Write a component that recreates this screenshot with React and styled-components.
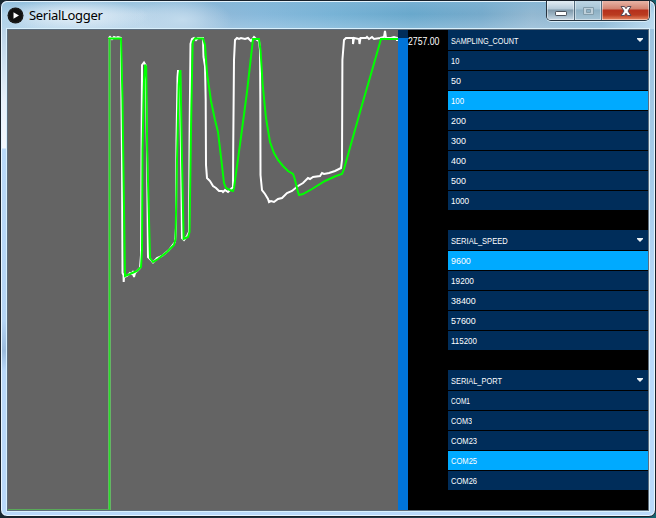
import React from "react";
import styled, { createGlobalStyle } from "styled-components";

const Global = createGlobalStyle`
  *, *::before, *::after { box-sizing: border-box; }
  body { margin: 0; background: #18242e; overflow: hidden; }
`;

const Desktop = styled.div`
  width: 656px;
  height: 518px;
  background: linear-gradient(90deg, #17262f, #263b49 60%, #14616f);
`;

const Window = styled.div`
  width: 656px;
  height: 517px;
  border: 1px solid #17202a;
  border-radius: 7px;
  padding: 0 5px 5px 6px;
  background:
    linear-gradient(180deg, transparent 0 28px, #b9d3e8 28px, #e8f1fb 100px, #f3f8fd 147px, #b9d9f8 148px, #b5d5f5 320px, #9bbbdc 350px, #b9d9fa 370px, #b9d9fa) 0 0 / 7px 100% no-repeat,
    linear-gradient(180deg, transparent 0 28px, #9dc3df 28px, #a5cbe9 180px, #b9d9fb 320px, #b9d9fb) 100% 0 / 7px 100% no-repeat,
    #b9d9fa;
  box-shadow: inset 0 0 0 1px #e9f6ff;
`;

const TitleBar = styled.header`
  display: flex;
  height: 28px;
  margin: 0 -4px 0 -5px;
  padding-left: 5px;
  border-top: 1px solid #e4f3fc;
  border-radius: 6px 6px 0 0;
  background:
    radial-gradient(ellipse 75px 17px at 72px 14px, #e6f0f8, #e6f0f800),
    radial-gradient(ellipse 50px 22px at 180px 18px, #c2dbed, #c2dbed00),
    linear-gradient(180deg, #80b5d690, transparent 45%, #c9e2f450),
    linear-gradient(90deg, #add0e8 0, #bad5e9 140px, #91b9d8 205px, #87b9db 260px, #78b3d6 330px, #69a8cc 410px, #76aacb 480px, #93b8d1 530px, #87b4d2 600px, #b7d8ee);
`;

const AppIcon = styled.svg`
  width: 17px;
  height: 17px;
  margin-top: 5px;
`;

const Title = styled.h1`
  margin: 3px auto 0 5px;
  font: 13px/20px "Noto Sans", sans-serif;
  letter-spacing: -0.3px;
  color: #000;
`;

const Controls = styled.div`
  display: flex;
  width: 104px;
  height: 20px;
  margin: -1px 4px 0 0;
  border: 1px solid #26333f;
  border-top: 0;
  border-radius: 0 0 5px 5px;
  overflow: hidden;
  box-shadow: 0 1px 0 #d9edf8, 1px 0 0 #c6dbea;
`;

const tones = {
  plain: "linear-gradient(180deg, #e2edf4, #b5cad9 8px, #8099aa 9px, #9fb7c7 14px, #cad9e4)",
  disabled: "linear-gradient(180deg, #bed6e4, #a7c4d5 8px, #8cafc3 9px, #a6c4d5)",
  close: "linear-gradient(180deg, #e8b4a6, #d38370 8px, #b6301c 9px, #ba3b20 14px, #e88964)",
};

const Control = styled.button`
  display: grid;
  place-items: center;
  width: ${(p) => p.$width}px;
  height: 19px;
  padding: 0;
  border: 0;
  border-right: ${(p) => (p.$tone === "close" ? "0" : "1px solid #526b7d")};
  background: ${(p) => tones[p.$tone]};
  box-shadow: inset 1px 0 #ffffff70, inset -1px -1px #ffffff70;
`;

const Glyph = styled.svg`
  display: block;
  width: 14px;
  height: 14px;
`;

const Client = styled.main`
  display: grid;
  grid-template-columns: 390px 10px 40px 200px;
  width: 642px;
  height: 482px;
  border: 1px solid #5d6e7e;
  background: #000;
  box-shadow: 0 0 0 1px #d9f0fc;
`;

const Chart = styled.svg`
  width: 390px;
  height: 480px;
  background: #646464;
`;

const Slider = styled.div`
  padding-top: 8px;
  background: #002d5a;
`;

const SliderFill = styled.div`
  height: 472px;
  background: #0074d9;
`;

const Reading = styled.output`
  padding-top: 5px;
  font: 10px/14px "Liberation Sans", sans-serif;
  color: #fff;
  white-space: nowrap;
`;

const Condensed = styled.span`
  display: block;
  transform: scaleX(${(p) => p.$scale});
  transform-origin: left;
  white-space: nowrap;
`;

const Sidebar = styled.aside`
  display: flex;
  flex-direction: column;
  gap: 20px;
`;

const List = styled.section`
  display: flex;
  flex-direction: column;
  gap: 1px;
  color: #fff;
  font: 9.7px/18px "Liberation Sans", sans-serif;
`;

const ListHeader = styled.div`
  display: flex;
  justify-content: space-between;
  height: 20px;
  padding: 2px 5px 0 3px;
  background: #002d5a;
`;

const Arrow = styled.svg`
  width: 6px;
  height: 4px;
  margin-top: 6px;
`;

const Item = styled.div`
  height: 19px;
  padding: 1px 3px 0;
  line-height: 17px;
  background: ${(p) => (p.$active ? "#00aaff" : "#002d5a")};
`;

const lists = [
  {
    name: "SAMPLING_COUNT", scale: 0.75, active: "100",
    items: [["10", 0.77], ["50", 0.92], ["100", 0.81], ["200", 0.92], ["300", 0.92], ["400", 0.92], ["500", 0.92], ["1000", 0.84]],
  },
  {
    name: "SERIAL_SPEED", scale: 0.78, active: "9600",
    items: [["9600", 0.92], ["19200", 0.85], ["38400", 0.92], ["57600", 0.92], ["115200", 0.82]],
  },
  {
    name: "SERIAL_PORT", scale: 0.765, active: "COM25",
    items: [["COM1", 0.68], ["COM3", 0.75], ["COM23", 0.78], ["COM25", 0.78], ["COM26", 0.78]],
  },
];

const raw = "109,510 109,38 110,37 112,39 114,37 116,38 118,37 121,38 121,55 122,158 122.5,273 123.5,275 123.7,282 124,277 127,276 130,273 132,274 133,271 134,277 135,273 140,268 141,255 141.5,155 142,72 142,65 144,62.5 145.5,65 147,150 148,257 151,260 153,262.5 157,258 162,256 169,250 175,242 176,228 176.5,140 177.5,77 178,71 180,71 181,150 182,238 184,240 187,236 189,232 189.5,140 190.5,44 192,39 194,38 196,40 198,38 203,38 203.5,57 205,66 205.7,100 206,165 207,178 210,181 213,186 216,188 219,191 222,191 223,192 225,190 228,192 232,188 233,188 233.2,150 234,60 235,40 237,38 239,39 241,38 245,39 248,38 251,41 254,37 257,40 259,41 260,50 260.3,100 260.5,175 262,190 265,194 268,199 269,202 271,201 274,202 278,199 282,198 287,193 292,191 298,186 303,183 308,178 310,179 313,177 320,176 322,173 324,174 329,173 335,171 341,168 342,160 342.4,60 344,40 346,38 353,38 353,44 354,38 359,39 359.5,44 360.5,38 366,38 367,37 369,39 372,37 374,39 380,38 384,37 385,31 386,38 391,38 394,37 397,38 397,41";
const smooth = "109,510 109,38.5 121,38.5 122.5,100 123.3,160 125,276 130,274 137,271 141,267 142,250 142.5,150 144,80 145.2,64.5 146.2,67 147.2,150 150,258 153,262 158,259 167,252 174,245 175.5,239 177,160 178.7,85 179.8,71 180.5,71 181.8,150 183.6,239 188,237 189.5,232 191,130 192,75 192.7,42 195,38.5 203,38.5 205,45 207,73 211,101 215,120 218,132 221,157 224,183 226,188 230,190 233,191 234,188 241,137 247,92 253,39 259,39 260.5,50 262.7,85 266,118 270,142 274,153 278,160 283,166 288,171 293,174 294.5,178 298,192 299,195 303,194 312,189 325,181 336,176 342,174 344,169 353,137 362,105 371,74 381,39 398,39";

function WaveChart() {
  return (
    <Chart viewBox="8 30 390 480" fill="none" aria-label="Serial data">
      <polyline points={raw} stroke="#fff" strokeWidth="2" />
      <polyline points={smooth} stroke="#00ff00" strokeWidth="2" />
      <path d="M109.5 39V510" stroke="#64b464" strokeWidth="3" />
      <path d="M109.5 39V510" stroke="#28dc28" strokeWidth="1" />
      <path d="M8 509.5H109" stroke="#59a959" />
    </Chart>
  );
}

function DropList({ name, scale, active, items }) {
  return (
    <List>
      <ListHeader>
        <Condensed $scale={scale}>{name}</Condensed>
        <Arrow viewBox="0 0 6 4"><path d="M0 0H6V1L3 4L0 1Z" fill="#e9eff3" /></Arrow>
      </ListHeader>
      {items.map(([label, labelScale]) => (
        <Item key={label} $active={label === active}>
          <Condensed $scale={labelScale}>{label}</Condensed>
        </Item>
      ))}
    </List>
  );
}

export default function App() {
  return (
    <>
      <Global />
      <Desktop>
        <Window>
          <TitleBar>
            <AppIcon viewBox="0 0 17 17">
              <circle cx="8.5" cy="8.5" r="8" fill="#111" />
              <circle cx="8.5" cy="8.5" r="7" fill="none" stroke="#3b3b3b" strokeWidth=".7" strokeDasharray="1 1" />
              <path d="M6.5 5.3L12 8.5L6.5 11.7Z" fill="#fff" />
            </AppIcon>
            <Title>SerialLogger</Title>
            <Controls>
              <Control $width={28} $tone="plain" aria-label="Minimize">
                <Glyph viewBox="0 0 14 14"><rect x="1.5" y="7.5" width="11" height="4" rx=".7" fill="#fff" stroke="#4a515b" /></Glyph>
              </Control>
              <Control $width={27} $tone="disabled" aria-label="Maximize">
                <Glyph viewBox="0 0 14 14"><path fillRule="evenodd" d="M2.5 3.5h10v7h-10zM5.5 5.5h4v3h-4z" fill="#bfd0da" stroke="#829caa" /></Glyph>
              </Control>
              <Control $width={47} $tone="close" aria-label="Close">
                <Glyph viewBox="0 0 14 14"><path d="M2 2.5H5.5L7 4.7L8.5 2.5H12L9 7L12 11.5H8.5L7 9.3L5.5 11.5H2L5 7Z" fill="#fff" stroke="#574956" strokeLinejoin="round" /></Glyph>
              </Control>
            </Controls>
          </TitleBar>
          <Client>
            <WaveChart />
            <Slider><SliderFill /></Slider>
            <Reading><Condensed $scale={0.87}>2757.00</Condensed></Reading>
            <Sidebar>{lists.map((list) => <DropList key={list.name} {...list} />)}</Sidebar>
          </Client>
        </Window>
      </Desktop>
    </>
  );
}
